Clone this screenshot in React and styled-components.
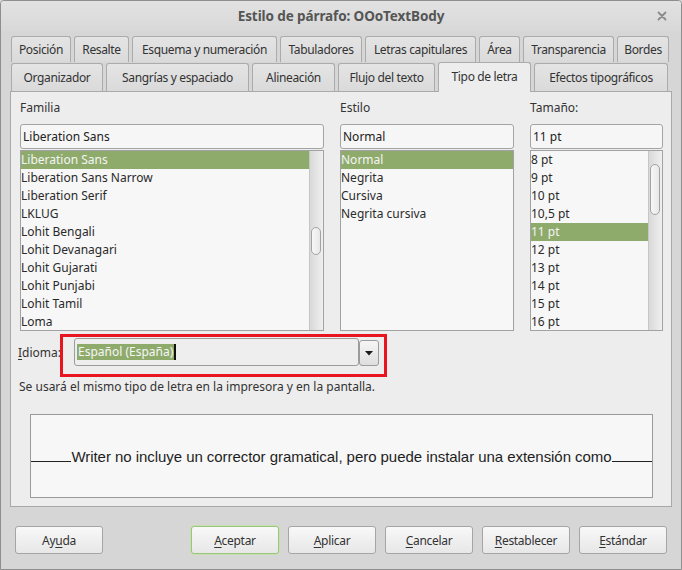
import React from "react";
import styled, { createGlobalStyle } from "styled-components";

const GlobalStyle = createGlobalStyle`
  html, body { margin: 0; padding: 0; background: #d6d6d6; }
  body { font-family: "Noto Sans", "Open Sans", sans-serif; font-size: 12px; color: #333; }
  * { box-sizing: border-box; }
`;

const Window = styled.div`
  width: 682px;
  height: 570px;
  border: 1px solid #8e8e8e;
  border-radius: 4px 4px 0 0;
  background: #d6d6d6;
  display: flex;
  flex-direction: column;
  overflow: hidden;
`;

const TitleBar = styled.div`
  height: 30px;
  flex: none;
  display: flex;
  align-items: center;
  justify-content: center;
  position: relative;
  background: linear-gradient(#e2e2e2, #d8d8d8);
`;

const Title = styled.div`
  font-size: 13.5px;
  font-weight: 700;
  color: #555;
  letter-spacing: -0.1px;
`;

const CloseBtn = styled.div`
  position: absolute;
  right: 14px;
  top: 10px;
  width: 10px;
  height: 10px;
  display: flex;
`;

const Body = styled.div`
  padding: 5px 9px 0 9px;
  display: flex;
  flex-direction: column;
`;

const TabRow = styled.div`
  display: flex;
  gap: 3px;
  margin: 0 2px 0 1px;
  height: ${(p) => p.$h}px;
  align-items: flex-end;
`;

const Tab = styled.div`
  flex: 0 0 auto;
  width: ${(p) => p.$w}px;
  height: ${(p) => (p.$active ? p.$h + 2 : p.$h)}px;
  margin-top: ${(p) => (p.$active ? -2 : 0)}px;
  display: flex;
  align-items: center;
  justify-content: center;
  white-space: nowrap;
  font-size: 12px;
  letter-spacing: -0.35px;
  color: #333;
  border: 1px solid #ababab;
  border-bottom: none;
  border-radius: 3px 3px 0 0;
  background: ${(p) => (p.$active ? "#ededed" : "linear-gradient(#e4e4e4, #dadada)")};
  position: relative;
  z-index: ${(p) => (p.$active ? 2 : 0)};
  margin-bottom: ${(p) => (p.$active ? -1 : 0)}px;
  padding-bottom: ${(p) => (p.$active ? 3 : 0)}px;
`;

const Panel = styled.div`
  border: 1px solid #a9a9a9;
  background: #ededed;
  padding: 8px 8px 8px 9px;
  display: flex;
  flex-direction: column;
`;

const Columns = styled.div`
  display: grid;
  grid-template-columns: 304px 174px 133px;
  column-gap: 16px;
`;

const Column = styled.div`
  display: flex;
  flex-direction: column;
`;

const Label = styled.div`
  height: 16px;
  line-height: 16px;
  margin-bottom: 8px;
  color: #333;
  white-space: nowrap;
`;

const Input = styled.div`
  height: 25px;
  border: 1px solid #a4a4a4;
  border-radius: 3px;
  background: #f6f6f6;
  padding-left: 2px;
  display: flex;
  align-items: center;
  color: #222;
  margin-bottom: 1px;
`;

const ListBox = styled.div`
  height: 181px;
  border: 1px solid #a2a2a2;
  background: #f7f7f7;
  display: flex;
  overflow: hidden;
`;

const Items = styled.div`
  flex: 1;
  display: flex;
  flex-direction: column;
`;

const Item = styled.div`
  height: 18px;
  flex: none;
  line-height: 18px;
  padding-left: 0;
  white-space: nowrap;
  color: ${(p) => (p.$sel ? "#f4f4f4" : "#2a2a2a")};
  background: ${(p) => (p.$sel ? "#8fab6c" : "transparent")};
`;

const ScrollTrack = styled.div`
  width: 14px;
  flex: none;
  border-left: 1px solid #c6c6c6;
  background: linear-gradient(to right, #d9d9d9, #efefef);
  position: relative;
`;

const Thumb = styled.div`
  position: absolute;
  left: 1px;
  width: 10px;
  border: 1px solid #a3a3a3;
  border-radius: 5px;
  background: linear-gradient(to right, #f7f7f7, #e8e8e8);
`;

const LangRow = styled.div`
  display: flex;
  align-items: center;
  margin-top: 7px;
  height: 28px;
`;

const LangLabel = styled.div`
  width: 56px;
  margin-left: -2px;
  color: #333;
`;

const ComboWrap = styled.div`
  position: relative;
  display: flex;
  align-items: center;
  width: 306px;
  height: 28px;
`;

const ComboEntry = styled.div`
  flex: 1;
  height: 28px;
  border: 1px solid #9c9c9c;
  border-radius: 3px;
  background: #eeeeee;
  display: flex;
  align-items: center;
  padding-left: 2px;
`;

const SelText = styled.span`
  background: #8fab6c;
  color: #f6f6f6;
  line-height: 16px;
  height: 16px;
  padding: 0 1px;
`;

const Caret = styled.span`
  width: 2px;
  height: 16px;
  background: #111;
`;

const DropBtn = styled.div`
  width: 20px;
  height: 26px;
  margin-top: 2px;
  margin-right: 1px;
  border: 1px solid #9c9c9c;
  border-radius: 3px;
  background: linear-gradient(#f6f6f6, #dedede);
  display: flex;
  align-items: center;
  justify-content: center;
`;

const RedMark = styled.div`
  position: absolute;
  left: -14px;
  right: -7px;
  top: -4px;
  bottom: -11px;
  border: 3px solid #e8141e;
  pointer-events: none;
`;

const Note = styled.div`
  margin-top: 13px;
  margin-left: -1px;
  height: 16px;
  line-height: 16px;
  color: #333;
  white-space: nowrap;
`;

const Preview = styled.div`
  margin: 19px 10px 0 10px;
  height: 84px;
  border: 1px solid #9a9a9a;
  background: #f7f7f7;
  display: flex;
  align-items: baseline;
  padding-top: 33px;
  font-family: "Liberation Sans", Arial, sans-serif;
  font-size: 15px;
  color: #1e1e1e;
`;

const Rule = styled.span`
  flex: 1;
  height: 0;
  border-bottom: 1px solid #222;
`;

const PreviewText = styled.span`
  white-space: nowrap;
  letter-spacing: -0.05px;
`;

const Footer = styled.div`
  display: flex;
  align-items: center;
  padding: 19px 14px 0 14px;
  gap: 9px;
`;

const Button = styled.div`
  width: 88px;
  height: 28px;
  border: 1px solid ${(p) => (p.$default ? "#9cc57c" : "#a5a5a5")};
  box-shadow: ${(p) => (p.$default ? "0 0 0 1px #c7e0b3" : "none")};
  border-radius: 3px;
  background: linear-gradient(#f8f8f8, #e7e7e7);
  display: flex;
  align-items: center;
  justify-content: center;
  font-size: 12px;
  letter-spacing: -0.3px;
  color: #333;
  margin-left: ${(p) => (p.$push ? "auto" : "0")};
`;

const U = styled.span`
  text-decoration: underline;
  text-underline-offset: 2px;
`;

const row1 = [
  ["Posición", 60],
  ["Resalte", 55],
  ["Esquema y numeración", 145],
  ["Tabuladores", 82],
  ["Letras capitulares", 111],
  ["Área", 41],
  ["Transparencia", 91],
  ["Bordes", 52],
];
const row2 = [
  ["Organizador", 92],
  ["Sangrías y espaciado", 143],
  ["Alineación", 83],
  ["Flujo del texto", 97],
  ["Tipo de letra", 93],
  ["Efectos tipográficos", 134],
];

const families = [
  "Liberation Sans",
  "Liberation Sans Narrow",
  "Liberation Serif",
  "LKLUG",
  "Lohit Bengali",
  "Lohit Devanagari",
  "Lohit Gujarati",
  "Lohit Punjabi",
  "Lohit Tamil",
  "Loma",
];
const styles = ["Normal", "Negrita", "Cursiva", "Negrita cursiva"];
const sizes = ["8 pt", "9 pt", "10 pt", "10,5 pt", "11 pt", "12 pt", "13 pt", "14 pt", "15 pt", "16 pt"];

function List({ items, selected, thumb }) {
  return (
    <ListBox>
      <Items>
        {items.map((t) => (
          <Item key={t} $sel={t === selected}>
            {t}
          </Item>
        ))}
      </Items>
      {thumb && (
        <ScrollTrack>
          <Thumb style={{ top: thumb[0], height: thumb[1] }} />
        </ScrollTrack>
      )}
    </ListBox>
  );
}

export default function App() {
  return (
    <>
      <GlobalStyle />
      <Window>
        <TitleBar>
          <Title>Estilo de párrafo: OOoTextBody</Title>
          <CloseBtn>
            <svg width="10" height="10" viewBox="0 0 10 10">
              <path d="M1.5 1.5 L8.5 8.5 M8.5 1.5 L1.5 8.5" stroke="#8a8a8a" strokeWidth="1.8" strokeLinecap="round" />
            </svg>
          </CloseBtn>
        </TitleBar>
        <Body>
          <TabRow $h={26}>
            {row1.map(([t, w]) => (
              <Tab key={t} $h={26} $w={w}>
                {t}
              </Tab>
            ))}
          </TabRow>
          <TabRow $h={29}>
            {row2.map(([t, w]) => (
              <Tab key={t} $h={28} $w={w} $active={t === "Tipo de letra"}>
                {t}
              </Tab>
            ))}
          </TabRow>
          <Panel>
            <Columns>
              <Column>
                <Label>Familia</Label>
                <Input>Liberation Sans</Input>
                <List items={families} selected="Liberation Sans" thumb={[76, 28]} />
              </Column>
              <Column>
                <Label>Estilo</Label>
                <Input>Normal</Input>
                <List items={styles} selected="Normal" />
              </Column>
              <Column>
                <Label>Tamaño:</Label>
                <Input>11 pt</Input>
                <List items={sizes} selected="11 pt" thumb={[13, 51]} />
              </Column>
            </Columns>
            <LangRow>
              <LangLabel>
                <U>I</U>dioma:
              </LangLabel>
              <ComboWrap>
                <ComboEntry>
                  <SelText>Español (España)</SelText>
                  <Caret />
                </ComboEntry>
                <DropBtn>
                  <svg width="8" height="5" viewBox="0 0 8 5">
                    <path d="M0 0 H8 L4 4.5 Z" fill="#1a1a1a" />
                  </svg>
                </DropBtn>
                <RedMark />
              </ComboWrap>
            </LangRow>
            <Note>Se usará el mismo tipo de letra en la impresora y en la pantalla.</Note>
            <Preview>
              <Rule />
              <PreviewText>Writer no incluye un corrector gramatical, pero puede instalar una extensión como</PreviewText>
              <Rule />
            </Preview>
          </Panel>
        </Body>
        <Footer>
          <Button>
            Ay<U>u</U>da
          </Button>
          <Button $push $default>
            <U>A</U>ceptar
          </Button>
          <Button>
            <U>A</U>plicar
          </Button>
          <Button>
            <U>C</U>ancelar
          </Button>
          <Button>
            <U>R</U>establecer
          </Button>
          <Button>
            <U>E</U>stándar
          </Button>
        </Footer>
      </Window>
    </>
  );
}
